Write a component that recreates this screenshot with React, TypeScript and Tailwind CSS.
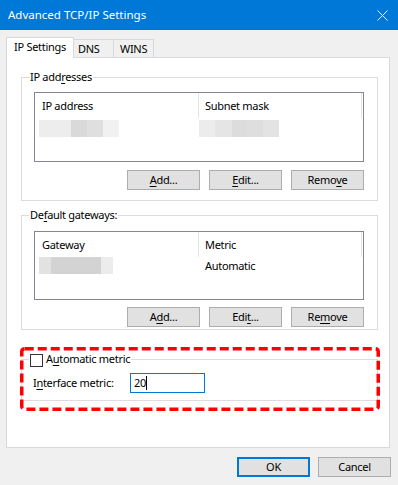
import React from "react";

function U({ children }: { children: React.ReactNode }) {
  return <span className="underline decoration-1 underline-offset-[2px]">{children}</span>;
}

function Btn({ children, primary }: { children: React.ReactNode; primary?: boolean }) {
  return (
    <div
      className={
        "w-[73px] h-[20px] flex items-center justify-center bg-[#e1e1e1] leading-[16px] " +
        (primary ? "border-2 border-[#0078d7]" : "border border-[#adadad]")
      }
    >
      {children}
    </div>
  );
}

function Blur({ segs }: { segs: [number, string][] }) {
  return (
    <div className="flex h-[17px]">
      {segs.map(([w, c], i) => (
        <div key={i} className="h-full" style={{ width: w, background: c }} />
      ))}
    </div>
  );
}

function ListBox({
  hClass,
  h1,
  h2,
  left,
  right,
  rowClass,
}: {
  hClass: string;
  h1: string;
  h2: string;
  left: React.ReactNode;
  right: React.ReactNode;
  rowClass: string;
}) {
  return (
    <div className={"border border-[#828790] bg-white flex flex-col " + hClass}>
      <div className="flex h-[25px]">
        <div className="w-[163px] pl-[7px] flex items-center leading-[16px]">{h1}</div>
        <div className="w-px bg-[#e5e5e5]" />
        <div className="w-[162px] pl-[6px] flex items-center leading-[16px]">{h2}</div>
        <div className="w-px bg-[#e5e5e5]" />
      </div>
      <div className={"flex " + rowClass}>
        <div className="w-[164px] pl-[4px]">{left}</div>
        <div className="flex-1">{right}</div>
      </div>
    </div>
  );
}

export default function App() {
  return (
    <div className="w-[398px] h-[485px] bg-[#f0f0f0] flex flex-col text-[11px] tracking-[-0.3px] text-black font-['Noto_Sans',sans-serif] overflow-hidden">
      {/* Title bar */}
      <div className="h-[30px] bg-[#0078d7] flex items-center justify-between pl-[8px] pr-[10px] text-white shrink-0">
        <span className="leading-[16px] text-[11.5px] tracking-normal">Advanced TCP/IP Settings</span>
        <svg width="11" height="11" viewBox="0 0 11 11">
          <path d="M0.5 0.5 L10.5 10.5 M10.5 0.5 L0.5 10.5" stroke="white" strokeWidth="1" fill="none" />
        </svg>
      </div>

      <div className="flex flex-col pl-[6px] pr-[8px]">
        {/* Tabs */}
        <div className="relative z-10 flex items-end h-[28px] -mb-[1px]">
          <div className="h-[21px] w-[68px] bg-white border-l border-t border-r border-[#d9d9d9] flex items-center justify-center leading-[16px] pb-[2px]">
            IP Settings
          </div>
          <div className="h-[18px] w-[40px] mb-[1px] border-t border-r border-[#d9d9d9] flex items-center pl-[4px] leading-[16px]">
            DNS
          </div>
          <div className="h-[18px] w-[40px] mb-[1px] border-t border-r border-[#d9d9d9] flex items-center pl-[6px] leading-[16px]">
            WINS
          </div>
        </div>

        {/* Panel */}
        <div className="h-[391px] border border-[#d9d9d9] bg-white pt-[11px] pl-[14px] pr-[11px] flex flex-col">
          {/* IP addresses */}
          <fieldset className="border border-[#dcdcdc] min-w-0">
            <legend className="ml-[7px] px-[1px] leading-[16px]">
              IP add<U>r</U>esses
            </legend>
            <div className="pl-[12px] pr-[13px] pt-[7px] pb-[10px] flex flex-col">
              <ListBox
                hClass="h-[70px]"
                h1="IP address"
                h2="Subnet mask"
                rowClass="mt-[2px]"
                left={<Blur segs={[[32, "#ededed"], [16, "#d9d9d9"], [16, "#dfdfdf"], [16, "#f1f1f1"]]} />}
                right={<Blur segs={[[16, "#ececec"], [17, "#e5e5e5"], [15, "#dcdcdc"], [16, "#dedede"], [16, "#e3e3e3"]]} />}
              />
              <div className="flex justify-end gap-[9px] mt-[8px]">
                <Btn>
                  <U>A</U>dd...
                </Btn>
                <Btn>
                  <U>E</U>dit...
                </Btn>
                <Btn>
                  Remo<U>v</U>e
                </Btn>
              </div>
            </div>
          </fieldset>

          {/* Default gateways */}
          <fieldset className="border border-[#dcdcdc] min-w-0 mt-[6px]">
            <legend className="ml-[7px] px-[1px] leading-[16px]">
              De<U>f</U>ault gateways:
            </legend>
            <div className="pl-[12px] pr-[13px] pt-[8px] pb-[2px] flex flex-col">
              <ListBox
                hClass="h-[69px]"
                h1="Gateway"
                h2="Metric"
                rowClass=""
                left={<Blur segs={[[12, "#e2e2e2"], [50, "#d3d3d3"], [12, "#ececec"]]} />}
                right={<div className="h-[17px] pl-[6px] flex items-center leading-[16px]">Automatic</div>}
              />
              <div className="flex justify-end gap-[9px] mt-[7px]">
                <Btn>
                  A<U>d</U>d...
                </Btn>
                <Btn>
                  Edi<U>t</U>...
                </Btn>
                <Btn>
                  Re<U>m</U>ove
                </Btn>
              </div>
            </div>
          </fieldset>

          {/* Automatic metric */}
          <div className="relative mt-[21px]">
            <fieldset className="border border-[#dcdcdc] min-w-0">
              <legend className="ml-[7px] px-[1px] h-[16px] flex items-start gap-[3px] leading-[16px]">
                <span className="mt-[3px] w-[13px] h-[13px] border border-[#333333] bg-white" />
                <span>
                  A<U>u</U>tomatic metric
                </span>
              </legend>
              <div className="pl-[11px] pt-[6px] pb-[7px] flex items-center">
                <span className="w-[97px] leading-[16px]">
                  I<U>n</U>terface metric:
                </span>
                <div className="w-[75px] h-[20px] border border-[#0078d7] flex items-center pl-[3px] leading-[16px]">
                  20<span className="w-px h-[14px] bg-black" />
                </div>
              </div>
            </fieldset>
            <svg
              className="absolute left-[-1px] top-[-4px] pointer-events-none"
              width="360"
              height="64"
              viewBox="0 0 360 64"
            >
              <rect
                x="1.75"
                y="1.75"
                width="356.5"
                height="60.5"
                rx="3"
                fill="none"
                stroke="#ff0000"
                strokeWidth="3.5"
                strokeDasharray="9 4"
              />
            </svg>
          </div>
        </div>

        {/* Footer buttons */}
        <div className="flex justify-end gap-[8px] mt-[9px] -mr-[1px]">
          <Btn primary>OK</Btn>
          <Btn>Cancel</Btn>
        </div>
      </div>
    </div>
  );
}
